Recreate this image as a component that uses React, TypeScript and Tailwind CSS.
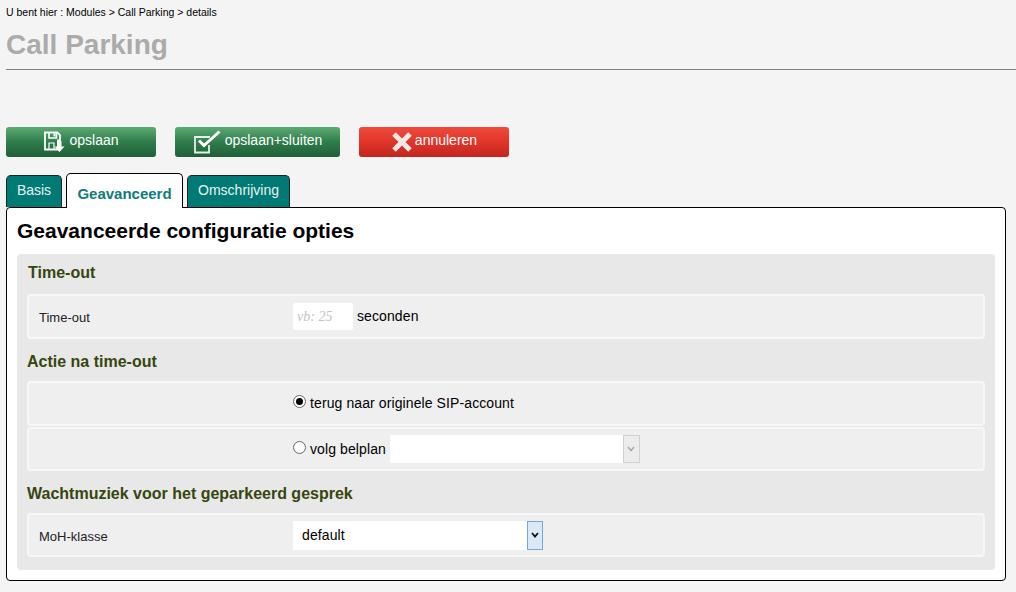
const sans = "font-['Liberation_Sans',Arial,sans-serif]";

function SaveIcon() {
  return (
    <svg width="24" height="24" viewBox="0 0 24 24" fill="none" className="shrink-0">
      <path d="M2 2.5H14.5L17 5V10.5H15V19.5H2Z" stroke="#fff" strokeWidth="1.8" fill="none" />
      <path d="M6 2.5V8H13.5V2.5" stroke="#fff" strokeWidth="1.6" />
      <rect x="10.5" y="3.5" width="2" height="3" fill="#fff" />
      <path d="M6 19V13H11V19" stroke="#fff" strokeWidth="1.2" />
      <path d="M18.5 11V16.5H21.5L16.5 22L11.5 16.5H14.5V11Z" fill="#fff" />
    </svg>
  );
}

function CheckIcon() {
  return (
    <svg width="30" height="24" viewBox="0 0 30 24" fill="none" className="shrink-0">
      <path d="M17 7H2V22.5H16V15" stroke="#e4efe8" strokeWidth="1.8" />
      <path d="M6 10.5L11 15.5L26.5 1.5" stroke="#fff" strokeWidth="3" />
    </svg>
  );
}

function CrossIcon() {
  return (
    <svg width="22" height="22" viewBox="0 0 22 22" className="shrink-0">
      <path d="M3 3L19 19M19 3L3 19" stroke="#f5e9e6" strokeWidth="5" />
    </svg>
  );
}

function ActionButton({ icon, label, className }: { icon: React.ReactNode; label: string; className: string }) {
  return (
    <button type="button" className={`flex h-[30px] items-center justify-center gap-[2px] rounded-[3px] text-sm text-white ${className}`}>
      {icon}
      <span className="-mt-[4px]">{label}</span>
    </button>
  );
}

function SectionTitle({ children, className = "" }: { children: React.ReactNode; className?: string }) {
  return <h3 className={`text-base leading-[18px] font-bold text-[#36460f] ${className}`}>{children}</h3>;
}

function Row({ label, children, className = "" }: { label?: string; children: React.ReactNode; className?: string }) {
  return (
    <div className={`mx-[10px] flex items-center rounded-[4px] border-2 border-[#f7f7f7] bg-[#efefef] tracking-[0.1px] ${className}`}>
      <div className="w-[264px] shrink-0 pt-[3px] pl-[10px] text-[13px] tracking-normal text-[#222]">{label}</div>
      {children}
    </div>
  );
}

export default function App() {
  return (
    <div className={`h-[592px] w-[1016px] overflow-hidden bg-[#f4f4f4] text-black ${sans}`}>
      <div className="px-[6px] pt-[6px] text-[10.5px] leading-[12px]">U bent hier : Modules &gt; Call Parking &gt; details</div>
      <h1 className="mt-[12px] ml-[6px] h-[40px] border-b border-[#808080] text-[28px] leading-[30px] font-bold text-[#ababab]">
        Call Parking
      </h1>

      <div className="mt-[57px] flex pl-[6px]">
        <ActionButton
          icon={<SaveIcon />}
          label="opslaan"
          className="w-[150px] bg-gradient-to-b from-[#5cab71] via-[#2f7d4c] to-[#205f38]"
        />
        <ActionButton
          icon={<CheckIcon />}
          label="opslaan+sluiten"
          className="ml-[19px] w-[165px] bg-gradient-to-b from-[#5cab71] via-[#2f7d4c] to-[#205f38]"
        />
        <ActionButton
          icon={<CrossIcon />}
          label="annuleren"
          className="ml-[19px] w-[150px] bg-gradient-to-b from-[#ee4b3c] via-[#e2342a] to-[#c1271f]"
        />
      </div>

      <div className="relative z-10 mt-[16px] flex h-[36px] items-start pl-[6px] text-sm">
        <div className="mt-[2px] flex h-[32px] w-[56px] items-start justify-center rounded-t-[5px] border border-b-0 border-[#222] bg-[#007a75] pt-[6px] leading-[16px] text-[#e8f2f1]">
          Basis
        </div>
        <div className="ml-[4px] flex h-[35px] w-[117px] items-start justify-center rounded-t-[5px] border border-b-0 border-black bg-white pt-[12px] text-[15px] leading-[16px] font-bold text-[#0e7c78]">
          Geavanceerd
        </div>
        <div className="mt-[2px] ml-[4px] flex h-[32px] w-[103px] items-start justify-center rounded-t-[5px] border border-b-0 border-[#222] bg-[#007a75] pt-[6px] leading-[16px] text-[#e8f2f1]">
          Omschrijving
        </div>
      </div>

      <div className="ml-[6px] -mt-[2px] h-[374px] w-[1000px] rounded-[4px] border border-black bg-white px-[10px] pt-[11px]">
        <h2 className="text-[21px] leading-[24px] font-bold">Geavanceerde configuratie opties</h2>
        <div className="mt-[11px] h-[316px] rounded-[4px] bg-[#e8e8e8] pt-[10px]">
          <SectionTitle className="ml-[11px]">Time-out</SectionTitle>
          <Row label="Time-out" className="mt-[12px] h-[45px]">
            <div className="flex h-[27px] w-[60px] items-center rounded-[2px] bg-white pl-[4px] font-['Liberation_Serif',serif] text-[14px] tracking-normal text-[#c4c4c4] italic">
              vb: 25
            </div>
            <span className="mb-[2px] ml-[4px] text-sm">seconden</span>
          </Row>
          <SectionTitle className="mt-[14px] ml-[10px]">Actie na time-out</SectionTitle>
          <Row className="mt-[10px] h-[45px]">
            <span className="mb-[4px] h-[13px] w-[13px] rounded-full border border-[#666] bg-white p-[2px]">
              <span className="block h-full w-full rounded-full bg-black" />
            </span>
            <span className="mb-[2px] ml-[4px] text-sm">terug naar originele SIP-account</span>
          </Row>
          <Row className="mt-[1px] h-[44px]">
            <span className="mb-[3px] h-[13px] w-[13px] rounded-full border border-[#666] bg-white" />
            <span className="ml-[4px] text-sm">volg belplan</span>
            <div className="ml-[4px] flex h-[28px] w-[250px] justify-end bg-white">
              <span className="flex w-[17px] items-center justify-center border border-[#d0d0d0] bg-[#ececec]">
                <svg width="8" height="6" viewBox="0 0 8 6">
                  <path d="M1 1L4 4.5L7 1" stroke="#a8a8a8" strokeWidth="1.5" fill="none" />
                </svg>
              </span>
            </div>
          </Row>
          <SectionTitle className="mt-[14px] ml-[10px]">Wachtmuziek voor het geparkeerd gesprek</SectionTitle>
          <Row label="MoH-klasse" className="mt-[10px] h-[44px]">
            <div className="flex h-[29px] w-[250px] items-center justify-between bg-white pl-[9px] text-sm">
              <span>default</span>
              <span className="flex h-full w-[16px] items-center justify-center border border-[#7aa6cf] bg-[#d9e9f8]">
                <svg width="8" height="6" viewBox="0 0 8 6">
                  <path d="M1 1L4 4.5L7 1" stroke="#111" strokeWidth="1.8" fill="none" />
                </svg>
              </span>
            </div>
          </Row>
        </div>
      </div>
    </div>
  );
}
